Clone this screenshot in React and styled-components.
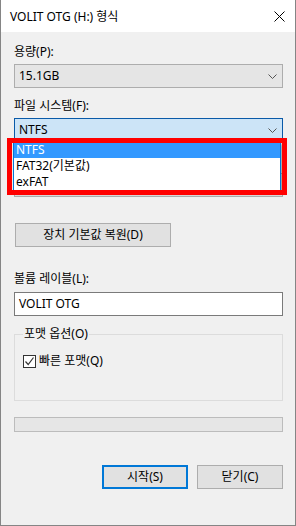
import React from "react";
import styled, { createGlobalStyle } from "styled-components";

const GlobalStyle = createGlobalStyle`
  html, body {
    margin: 0;
    padding: 0;
    background: #f0f0f0;
  }
  body {
    font-family: "Noto Sans", "Noto Sans CJK KR", sans-serif;
    font-size: 12px;
    color: #000;
  }
  * { box-sizing: border-box; }
`;

const FS_OPTIONS = ["NTFS", "FAT32(기본값)", "exFAT"];

const Chevron = () => (
  <svg width="9" height="5" viewBox="0 0 9 5">
    <path d="M0.5 0.5 L4.5 4.5 L8.5 0.5" fill="none" stroke="#555" strokeWidth="1" />
  </svg>
);

const CloseIcon = () => (
  <svg width="11" height="11" viewBox="0 0 11 11">
    <path d="M0.5 0.5 L10.5 10.5 M10.5 0.5 L0.5 10.5" stroke="#000" strokeWidth="1" />
  </svg>
);

const Check = () => (
  <svg width="11" height="11" viewBox="0 0 11 11">
    <path d="M1.5 5.5 L4.2 8.5 L9.5 1.5" fill="none" stroke="#333" strokeWidth="1.2" />
  </svg>
);

const App = () => {
  return (
    <>
      <GlobalStyle />
      <Window>
        <TitleBar>
          <Title>VOLIT OTG (H:) 형식</Title>
          <CloseBox>
            <CloseIcon />
          </CloseBox>
        </TitleBar>
        <Body>
          <Label>용량(P):</Label>
          <Combo $mt={4}>
            <span>15.1GB</span>
            <Chevron />
          </Combo>

          <Label $mt={10}>파일 시스템(F):</Label>
          <ComboWrap>
            <Combo $mt={4} $focused>
              <span>NTFS</span>
              <Chevron />
            </Combo>
            <DropList>
              {FS_OPTIONS.map((opt, i) => (
                <DropItem key={opt} $selected={i === 0}>
                  {opt}
                </DropItem>
              ))}
            </DropList>
            <Highlight />
          </ComboWrap>

          {/* allocation size row, hidden under the open list */}
          <Label $mt={11} />
          <Combo $mt={4} />

          <PushButton $mt={26} $width={156} $ml={1}>
            장치 기본값 복원(D)
          </PushButton>

          <Label $mt={24}>볼륨 레이블(L):</Label>
          <TextInput $mt={5}>VOLIT OTG</TextInput>

          <Group>
            <Legend>포맷 옵션(O)</Legend>
            <CheckRow>
              <CheckBox>
                <Check />
              </CheckBox>
              <span>빠른 포맷(Q)</span>
            </CheckRow>
          </Group>

          <Progress />

          <ButtonRow>
            <PushButton $width={86} $default>
              시작(S)
            </PushButton>
            <PushButton $width={86}>닫기(C)</PushButton>
          </ButtonRow>
        </Body>
      </Window>
    </>
  );
};

export default App;

const Window = styled.div`
  width: 296px;
  height: 526px;
  border: 1px solid #858585;
  border-top: none;
  background: #f0f0f0;
  display: flex;
  flex-direction: column;
`;

const TitleBar = styled.div`
  height: 32px;
  background: #fff;
  display: flex;
  align-items: center;
  justify-content: space-between;
  padding: 0 10px 0 9px;
`;

const Title = styled.div`
  font-size: 12px;
  line-height: 16px;
  margin-top: 2px;
`;

const CloseBox = styled.div`
  width: 11px;
  height: 11px;
  display: flex;
`;

const Body = styled.div`
  flex: 1;
  display: flex;
  flex-direction: column;
  padding: 12px 12px 0 13px;
`;

const Label = styled.div`
  line-height: 16px;
  height: 16px;
  margin-top: ${(p) => p.$mt || 0}px;
`;

const ComboWrap = styled.div`
  position: relative;
`;

const Combo = styled.div`
  height: 24px;
  margin-top: ${(p) => p.$mt || 0}px;
  border: 1px solid ${(p) => (p.$focused ? "#0a5aa8" : "#adadad")};
  background: ${(p) => (p.$focused ? "#cce4f7" : "#e5e5e5")};
  display: flex;
  align-items: center;
  justify-content: space-between;
  padding: 0 5px 0 4px;
  line-height: 16px;
`;

const DropList = styled.div`
  position: absolute;
  top: 27px;
  left: -1px;
  width: 268px;
  border: 1px solid #0078d7;
  background: #fff;
  box-shadow: 2px 3px 3px rgba(0, 0, 0, 0.35);
  z-index: 2;
`;

const DropItem = styled.div`
  height: 16px;
  line-height: 16px;
  padding-left: 2px;
  background: ${(p) => (p.$selected ? "#3399ff" : "#fff")};
  color: ${(p) => (p.$selected ? "#fff" : "#000")};
`;

const Highlight = styled.div`
  position: absolute;
  top: 24px;
  left: -7px;
  width: 280px;
  height: 57px;
  border: 5px solid #ff0000;
  z-index: 3;
  pointer-events: none;
`;

const PushButton = styled.div`
  width: ${(p) => p.$width}px;
  height: 24px;
  margin-top: ${(p) => p.$mt || 0}px;
  margin-left: ${(p) => p.$ml || 0}px;
  background: #e1e1e1;
  border: ${(p) => (p.$default ? "2px solid #0078d7" : "1px solid #adadad")};
  display: flex;
  align-items: center;
  justify-content: center;
  line-height: 16px;
`;

const TextInput = styled.div`
  height: 24px;
  margin-top: ${(p) => p.$mt || 0}px;
  border: 1px solid #7a7a7a;
  background: #fff;
  display: flex;
  align-items: center;
  padding-left: 4px;
  line-height: 16px;
`;

const Group = styled.fieldset`
  margin: 10px 0 0;
  padding: 0 0 31px 8px;
  border: 1px solid #dcdcdc;
  min-width: 0;
`;

const Legend = styled.legend`
  padding: 0 1px;
  line-height: 16px;
`;

const CheckRow = styled.div`
  margin-top: 11px;
  display: flex;
  align-items: center;
  gap: 3px;
  line-height: 16px;
`;

const CheckBox = styled.div`
  width: 13px;
  height: 13px;
  border: 1px solid #333;
  background: #fff;
  display: flex;
  align-items: center;
  justify-content: center;
`;

const Progress = styled.div`
  height: 15px;
  margin-top: 16px;
  background: #e6e6e6;
  border: 1px solid #bcbcbc;
`;

const ButtonRow = styled.div`
  margin-top: 33px;
  display: flex;
  justify-content: flex-end;
  gap: 9px;
`;
